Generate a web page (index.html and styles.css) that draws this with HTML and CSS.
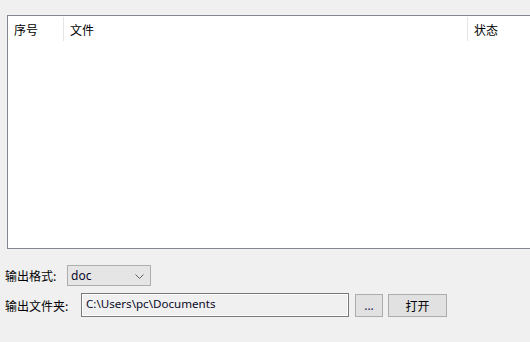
FILE: index.html
```html
<!DOCTYPE html>
<html>
<head>
<meta charset="utf-8">
<link rel="stylesheet" href="styles.css">
</head>
<body>
<div class="app">
  <div class="list">
    <div class="list-head">
      <div class="col col-no">序号</div>
      <div class="col col-file">文件</div>
      <div class="col col-state">状态</div>
    </div>
  </div>
  <div class="row row-format">
    <span class="label label-format">输出格式:</span>
    <div class="combo">
      <span class="combo-text">doc</span>
      <svg class="combo-arrow" width="9" height="5" viewBox="0 0 9 5"><path d="M0.5 0.5 L4.5 4.5 L8.5 0.5" fill="none" stroke="#606060" stroke-width="1"/></svg>
    </div>
  </div>
  <div class="row row-folder">
    <span class="label label-folder">输出文件夹:</span>
    <div class="textbox">C:\Users\pc\Documents</div>
    <button class="btn btn-browse">...</button>
    <button class="btn btn-open">打开</button>
  </div>
</div>
</body>
</html>
```
FILE: styles.css
```css
html, body {
  margin: 0;
  padding: 0;
  background: #f0f0f0;
  width: 530px;
  height: 342px;
  overflow: hidden;
}
.app {
  padding: 15px 0 0 7px;
  font-family: "Noto Sans CJK SC", "Noto Sans", sans-serif;
  font-size: 12px;
  color: #000;
}
.list {
  box-sizing: border-box;
  width: 540px;
  height: 234px;
  background: #fff;
  border: 1px solid #828790;
}
.list-head {
  display: flex;
  height: 24px;
  padding-top: 1px;
}
.col {
  box-sizing: border-box;
  padding-left: 6px;
  padding-top: 1px;
  line-height: 24px;
  border-right: 1px solid #e5e5e5;
}
.col-no { width: 56px; }
.col-file { width: 404px; }
.col-state { flex: 1; border-right: none; }
.row {
  display: flex;
  align-items: center;
  margin-left: -2px;
}
.row-format {
  margin-top: 16px;
  height: 21px;
}
.row-folder {
  margin-top: 7px;
  height: 24px;
}
.label { display: inline-block; }
.label-format { width: 62px; }
.label-folder { width: 76px; }
.combo {
  box-sizing: border-box;
  width: 84px;
  height: 21px;
  background: #e5e5e5;
  border: 1px solid #adadad;
  display: flex;
  align-items: center;
  justify-content: space-between;
  padding: 0 6px 0 3px;
}
.combo-text {
  font-family: "Noto Sans", "DejaVu Sans", sans-serif;
  font-size: 12px;
  color: #0a0a28;
}
.combo-arrow { display: block; margin-top: 1px; }
.textbox {
  box-sizing: border-box;
  width: 268px;
  height: 24px;
  border: 1px solid #7a7a7a;
  box-shadow: inset 0 0 0 1px #fff;
  background: #f0f0f0;
  padding: 0 4px;
  line-height: 20px;
  font-family: "Noto Sans", "DejaVu Sans", sans-serif;
  font-size: 11.6px;
  color: #0a0a28;
}
.btn {
  box-sizing: border-box;
  height: 23px;
  margin: 0;
  background: #e1e1e1;
  border: 1px solid #adadad;
  font-family: "Noto Sans CJK SC", "Noto Sans", sans-serif;
  font-size: 12px;
  color: #000;
  padding: 0;
  margin-top: 1px;
}
.btn-browse {
  width: 28px;
  margin-left: 6px;
  line-height: 18px;
  font-family: "Noto Sans", sans-serif;
  color: #1a1a50;
}
.btn-open {
  width: 59px;
  margin-left: 5px;
}
```
